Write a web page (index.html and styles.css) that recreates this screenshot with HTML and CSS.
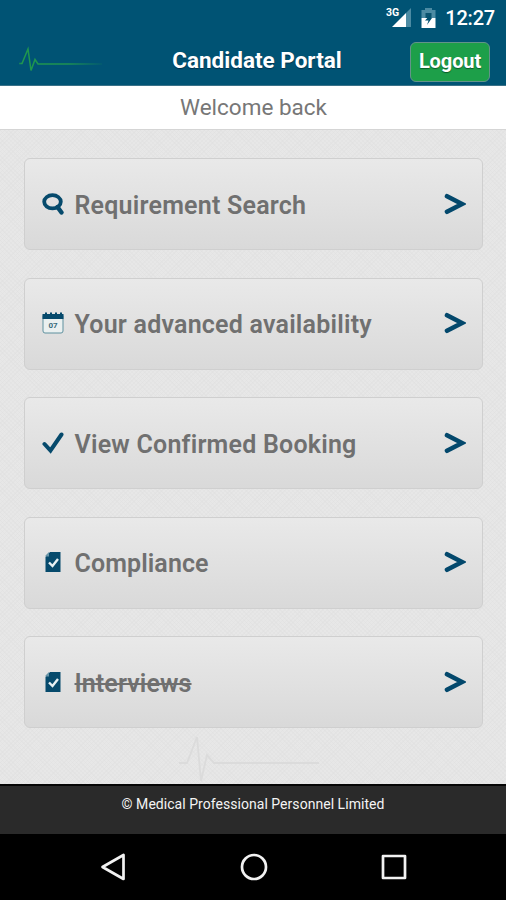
FILE: index.html
```html
<!DOCTYPE html>
<html lang="en">
<head>
<meta charset="utf-8">
<title>Candidate Portal</title>
<link rel="stylesheet" href="styles.css">
</head>
<body>
<svg class="defs" width="0" height="0">
  <symbol id="chevron" viewBox="0 0 22 22"><path d="M3 3.200 18 11 3 18.800" fill="none" stroke="#03486c" stroke-width="4.600" stroke-linecap="round" stroke-linejoin="miter"/></symbol>
  <symbol id="document" viewBox="0 0 22 22"><path d="M8 1h10.500v20H3.500V6z" fill="#064a6c"/><path d="M3.500 4.500 7 1v4.500H3.500z" fill="#6995a8"/><path d="m7 11.500 3.500 3.500 5.500-7" fill="none" stroke="#e6f0f3" stroke-width="2.400"/></symbol>
</svg>
<header class="top">
  <div class="status">
    <svg class="signal" width="27" height="22" viewBox="0 0 27 22">
      <path d="M26 2v19h-5V7z" fill="#4c8ba3"/><path d="M21 7v14H7z" fill="#fff"/>
      <text x="1" y="10" class="network">3G</text>
    </svg>
    <svg class="battery" width="15" height="22" viewBox="0 0 15 22">
      <path d="M4 1h7v2h3.500v8H.5V3H4z" fill="#4c8ba3"/><path d="M4.500 6h6v5h-6z" fill="#09536f"/>
      <path d="M.5 11h14v10H.5z" fill="#fff"/><path d="M10 7 4 13.500h3.500L6 18l5-7H8z" fill="#00506f"/>
    </svg>
    <span class="clock">12:27</span>
  </div>
  <div class="bar">
    <svg class="pulse" width="90" height="28" viewBox="0 0 90 28">
      <defs><linearGradient id="fade" gradientUnits="userSpaceOnUse" x1="0" y1="0" x2="86" y2="0"><stop offset="0" stop-color="#20984d" stop-opacity=".2"/><stop offset=".05" stop-color="#20984d"/><stop offset=".6" stop-color="#20984d" stop-opacity=".9"/><stop offset="1" stop-color="#20984d" stop-opacity=".1"/></linearGradient></defs>
      <path d="M2 17.500h3L11 3l3 21.500 4-11 3 4.500h64" fill="none" stroke="url(#fade)" stroke-width="1.500"/>
    </svg>
    <h1 class="title">Candidate Portal</h1>
    <button class="logout">Logout</button>
  </div>
</header>
<div class="welcome">Welcome back</div>
<main class="menu">
  <a class="item"><svg class="icon" viewBox="0 0 22 22"><ellipse cx="10.500" cy="8.800" rx="8.300" ry="6.600" fill="none" stroke="#064a6c" stroke-width="3.800"/><path d="m15.500 14 4 5.500" stroke="#064a6c" stroke-width="4.400" stroke-linecap="round"/></svg><span class="label">Requirement Search</span><svg class="arrow"><use href="#chevron"/></svg></a>
  <a class="item"><svg class="icon" viewBox="0 0 22 22"><path d="M1 3.500V19q0 2 2 2h16q2 0 2-2V3.500" fill="#eaf0f0" stroke="#5f919f"/><path d="M.5 2H3V.5h2V2h3V.5h2V2h3V.5h2V2h3V.5h2V2h1.500v5H.5z" fill="#064a6c"/><text x="6.500" y="15.500" class="day">07</text></svg><span class="label">Your advanced availability</span><svg class="arrow"><use href="#chevron"/></svg></a>
  <a class="item"><svg class="icon" viewBox="0 0 22 22"><path d="m2.500 12 6 6.500L19.500 2.500" fill="none" stroke="#064a6c" stroke-width="4" stroke-linecap="round"/></svg><span class="label">View Confirmed Booking</span><svg class="arrow"><use href="#chevron"/></svg></a>
  <a class="item"><svg class="icon"><use href="#document"/></svg><span class="label short">Compliance</span><svg class="arrow"><use href="#chevron"/></svg></a>
  <a class="item"><svg class="icon"><use href="#document"/></svg><span class="label short struck">Interviews</span><svg class="arrow"><use href="#chevron"/></svg></a>
  <svg class="watermark" width="150" height="52" viewBox="0 0 150 52"><path d="M0 30h8L18 4l4 44 6-26 7 8h105" fill="none" stroke="#dbdbdb" stroke-width="1.800"/></svg>
</main>
<footer class="footer">© Medical Professional Personnel Limited</footer>
<nav class="keys">
  <svg width="28" height="28" viewBox="0 0 28 28"><path d="M24.500 2v24L3.500 14z"/></svg>
  <svg width="28" height="28" viewBox="0 0 28 28"><circle cx="14" cy="14" r="12"/></svg>
  <svg width="28" height="28" viewBox="0 0 28 28"><path d="M3 3h22v22H3z"/></svg>
</nav>
</body>
</html>
```
FILE: styles.css
```css
* { box-sizing: border-box; }
body { margin: 0; width: 506px; height: 900px; display: flex; flex-direction: column; overflow: hidden; font-family: Roboto, sans-serif; background: #000; }
svg { display: block; flex: none; }
.defs { position: absolute; }
.top { height: 86px; flex: none; background: #005374; color: #fff; border-bottom: 1px solid #397188; }
.status { height: 38px; padding: 6px 11px 0 0; display: flex; justify-content: flex-end; }
.signal { margin-right: 9px; }
.battery { margin-right: 9px; margin-top: 1px; }
.network { font: 700 10.500px Roboto, sans-serif; fill: #fff; }
.clock { font-size: 20px; font-weight: 500; line-height: 25px; letter-spacing: -.2px; }
.bar { height: 47px; padding: 4px 16px 0 17px; display: grid; grid-template-columns: 90px 1fr 80px; align-items: start; }
.pulse { margin-top: 4px; }
.title { margin: 5px 0 0; padding-right: 3px; font-size: 22.500px; line-height: 27px; font-weight: 700; text-align: center; white-space: nowrap; text-shadow: 0 1px 1px #00304c; }
.logout { width: 80px; height: 40px; padding: 0 0 2px; border: 1px solid #63938a; border-radius: 6px; background: #1d9f49; color: #fff; font: 700 20px Roboto, sans-serif; letter-spacing: -.1px; text-shadow: 0 1px 1px #0b5c29; }
.welcome { height: 43px; flex: none; background: #fff; color: #777; font-size: 22.500px; line-height: 43px; text-align: center; padding-left: 1px; }
.menu { height: 655px; flex: none; padding: 28px 23px 0 24px; display: flex; flex-direction: column; gap: 27.500px; background: repeating-linear-gradient(45deg, #dedede60 0 1px, transparent 1px 3px), repeating-linear-gradient(135deg, #dedede60 0 1px, transparent 1px 3px), #e7e7e7; border-top: 1px solid #d5d5d5; }
.item { height: 92px; flex: none; display: flex; align-items: center; padding: 0 16px 0 17px; border: 1px solid #cfcfcf; border-radius: 6px; background: linear-gradient(#e9e9e9, #d9d9d9); }
.icon { width: 22px; height: 22px; margin: -1px 10.500px 0 0; }
.label { font-size: 25px; line-height: 30px; font-weight: 600; letter-spacing: .22px; color: #707070; white-space: nowrap; margin-top: 3px; }
.short { letter-spacing: .1px; }
.day { font: 700 8px Roboto, sans-serif; fill: #386b7c; }
.struck { text-decoration: line-through; text-decoration-thickness: 2px; }
.arrow { width: 22px; height: 22px; margin: -1px 0 0 auto; }
.watermark { margin: -23px 0 0 155px; }
.footer { height: 50px; flex: none; border-top: 2px solid #050505; background: #2a2a2a; color: #f4f4f4; font-size: 14px; line-height: 37px; letter-spacing: .04px; text-align: center; }
.keys { height: 66px; flex: none; background: #000; display: flex; justify-content: space-between; padding: 19px 98px 0 99px; }
.keys svg { fill: none; stroke: #f2f2f2; stroke-width: 2.700; stroke-linejoin: round; }
```
